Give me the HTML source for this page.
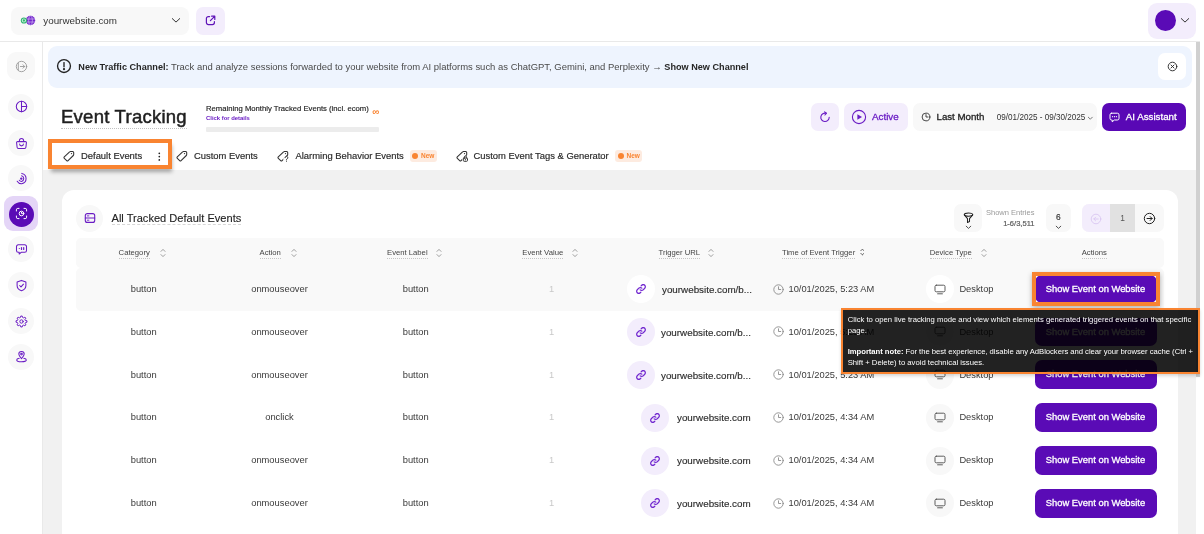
<!DOCTYPE html>
<html>
<head>
<meta charset="utf-8">
<title>Event Tracking</title>
<style>
*{box-sizing:border-box;margin:0;padding:0}
html,body{width:1204px;height:534px;overflow:hidden;background:#fff}
body{font-family:"Liberation Sans",sans-serif;color:#2b2b2b;position:relative;font-size:9px}
#wrap{position:absolute;left:0;top:0;width:1204px;height:534px;will-change:transform;overflow:hidden}
.abs{position:absolute}
svg{display:block}
/* top bar */
#topbar{left:0;top:0;width:1200px;height:42px;background:#fff;border-bottom:1px solid #e9e9e9}
#site{left:11px;top:7px;width:177.5px;height:27.5px;background:#f8f8f8;border-radius:8px}
#site .t{left:32.3px;top:0;line-height:27px;font-size:9.82px;color:#333}
#ext{left:196px;top:7px;width:29px;height:27.5px;background:#f3edfc;border-radius:7px}
#ava{left:1148px;top:3px;width:48.3px;height:35.7px;background:#f3edfc;border-radius:9px}
#ava .av{left:6.8px;top:7.1px;width:21.2px;height:21.2px;border-radius:50%;background:#5a0bb6}
/* sidebar */
#side{left:0;top:42px;width:43px;height:492px;background:#fff;border-right:1px solid #e9e9e9}
.sic{left:8px;width:26px;height:26px;border-radius:50%;background:radial-gradient(circle at 50% 50%,#f9f9f9 0,#f9f9f9 11.9px,rgba(249,249,249,0) 12.5px)}
/* main */
#mainbg{left:43px;top:170px;width:1153px;height:364px;background:#f1f1f1}
#scroll{left:1196.1px;top:42px;width:3.7px;height:334.5px;background:#d0d0d0}
#banner{left:48px;top:46px;width:1143.5px;height:41.5px;background:#eef4fe;border-radius:9px}
#banner .t{left:30.3px;top:-0.5px;line-height:41.5px;font-size:9.48px;color:#4a4a4a;white-space:nowrap}
#banner b{color:#262626;font-size:9.15px}
#bclose{left:1110px;top:7px;width:28px;height:27px;background:#fff;border-radius:7px}
#title{left:61px;top:105px;font-size:18.5px;line-height:23.1px;color:#1f1f1f;white-space:nowrap;border-bottom:1px dotted #c2c2c2;letter-spacing:0.25px;-webkit-text-stroke:0.5px #1f1f1f}
/* card */
#card{left:61.5px;top:189.6px;width:1116.8px;height:360px;background:#fff;border-radius:12px}

.ico{fill:none;stroke-linecap:round;stroke-linejoin:round}
.med{-webkit-text-stroke:0.3px currentColor}
/* header controls */
.hbtn{top:103px;height:28.3px;border-radius:7px}
#refresh{left:811px;width:28px;background:#f3edfc}
#active{left:844px;width:64px;background:#f3edfc}
#active .t{left:28px;top:.4px;line-height:28px;font-size:9.8px;color:#6a1cc4}
#range{left:913px;width:184px;background:#f8f8f8}
#range .a{left:23.5px;top:.4px;line-height:28px;font-size:9.7px;color:#222;white-space:nowrap}
#range .b{left:83.8px;top:0.7px;line-height:28px;font-size:8.13px;color:#333;white-space:nowrap}
#ai{left:1102px;width:84px;background:#5908b5}
#ai .t{left:23.8px;top:.3px;line-height:28px;font-size:9.76px;color:#fff;white-space:nowrap}
/* quota */
#q1{left:206px;top:103.8px;font-size:7.7px;line-height:9px;color:#222;white-space:nowrap;-webkit-text-stroke:0.15px #222}
#q2{left:206px;top:114px;font-size:5.9px;line-height:8px;color:#6a1cc4;font-weight:bold;white-space:nowrap}
#q3{left:206px;top:127.2px;width:173px;height:4.7px;background:#ececec;border-radius:1px}
#q4{left:372.2px;top:107.4px;font-size:9.6px;line-height:10px;color:#f98431;font-weight:bold}
/* tabs */
.tab{top:149.4px;line-height:14px;font-size:9.42px;color:#2b2b2b;white-space:nowrap;-webkit-text-stroke:0.18px #2b2b2b}
.tico{top:150px}
#hl1{left:48px;top:139px;width:124px;height:30px;border:4px solid #f98431;background:#fff;box-shadow:1px 4px 4px -1.5px rgba(0,0,0,.32)}
.badge{top:150px;width:27px;height:12px;border-radius:3px;background:#fdebe0}
.badge i{position:absolute;left:2.5px;top:2.8px;width:6.4px;height:6.4px;border-radius:50%;background:#f98431}
.badge span{position:absolute;left:11.5px;top:0;line-height:12px;font-size:6.5px;font-weight:bold;color:#f98431}

/* card content */
#cico{left:76px;top:205px;width:27px;height:27px;border-radius:50%;background:#f8f8f8}
#ctitle{left:111.5px;top:211.6px;font-size:11.07px;line-height:12.6px;color:#222;white-space:nowrap;border-bottom:1px dashed #d6d6d6;-webkit-text-stroke:0.12px #222}
.tb{top:204.2px;height:28.2px;background:#f8f8f8;border-radius:7px}
#se1{left:940px;top:208px;width:94.5px;text-align:right;font-size:7.54px;line-height:9px;color:#9a9a9a;white-space:nowrap}
#se2{left:940px;top:219px;width:94.5px;text-align:right;font-size:7.55px;line-height:9px;color:#5c5c5c;white-space:nowrap;-webkit-text-stroke:0.2px #5c5c5c}
#thead{left:76px;top:237.5px;width:1087.5px;height:30.2px;background:#f9f9f9;border-radius:5px}
.th{top:247.6px;font-size:7.7px;line-height:10.2px;color:#444;white-space:nowrap;border-bottom:1px dotted #c4c4c4}
#row1bg{left:76px;top:267.5px;width:1087.5px;height:43px;background:#f9f9f9;border-radius:5px}
.cc{font-size:9.35px;line-height:14px;color:#3a3a3a;white-space:nowrap;transform:translateX(-50%)}
.l{font-size:9.3px;line-height:14px;color:#3a3a3a;white-space:nowrap}
.one{color:#c9c9c9}
.url{margin-top:.6px;font-size:9.82px;color:#2e2e2e;-webkit-text-stroke:0.15px #2e2e2e}
.circ{width:28px;height:28px;border-radius:50%}
.btn{left:1034.5px;width:122px;height:28.6px;border-radius:7px;background:#5a0bb6;color:#fff;font-size:9.4px;line-height:28.6px;text-align:center;white-space:nowrap}

/* sidebar items */
#sact{left:4px;top:196px;width:34px;height:35px;border-radius:9px;background:#e4d5f7}
#sact i{position:absolute;left:5px;top:5.500px;width:25px;height:25px;border-radius:50%;background:#5a0bb6}
/* highlight + tooltip */
#hl2{left:1032px;top:272px;width:128px;height:33.800px;border:4px solid #f98431;box-shadow:0 2px 5px rgba(0,0,0,.3)}
#tip{left:841px;top:308px;width:359.2px;height:66px;background:rgba(0,0,0,.865);border:2px solid #f98431;box-shadow:0 2px 3px rgba(0,0,0,.16);color:#fff;font-size:7.7px;line-height:10.700px;padding:5.300px 0 0 4.700px;white-space:nowrap}
#tip p{margin:0 0 10.700px 0}
#tl3{letter-spacing:-0.04px}
</style>
</head>
<body>
<div id="wrap">
<div id="topbar" class="abs"></div>
<div id="site" class="abs"><div class="t abs">yourwebsite.com</div></div>
<div id="ext" class="abs"></div>
<div id="ava" class="abs"><div class="av abs"></div></div>

<div id="side" class="abs"></div>
<div id="mainbg" class="abs"></div>
<div id="scroll" class="abs"></div>

<div id="banner" class="abs">
  <div class="t abs"><b>New Traffic Channel:</b> Track and analyze sessions forwarded to your website from AI platforms such as ChatGPT, Gemini, and Perplexity &rarr; <b>Show New Channel</b></div>
  <div id="bclose" class="abs"></div>
</div>

<div id="title" class="abs">Event Tracking</div>


<!-- top bar icons -->
<svg class="abs" style="left:20px;top:13px" width="16" height="15" viewBox="0 0 16 15">
  <circle cx="10.500" cy="7.500" r="4.700" fill="#7226cc"/>
  <g stroke="#d9c4f5" stroke-width=".75" fill="none" opacity=".85"><ellipse cx="10.500" cy="7.500" rx="1.900" ry="4.500"/><path d="M6 6h9M6 9h9"/></g>
  <circle cx="3.900" cy="7.500" r="3.100" fill="#2db56d"/><circle cx="3.900" cy="7.500" r="2.050" fill="#d4f3e2"/><circle cx="3.900" cy="7.500" r="1.150" fill="#2db56d"/>
</svg>
<svg class="abs ico" style="left:171px;top:17px" width="10" height="7" viewBox="0 0 10 7" stroke="#333" stroke-width="1"><path d="M1.300 1.600 5 5.100 8.700 1.600"/></svg>
<svg class="abs ico" style="left:205px;top:15px" width="11" height="11" viewBox="0 0 11 11" stroke="#5f14b8" stroke-width="1.2"><path d="M4.6 1.6H3.4A2 2 0 0 0 1.4 3.6v4a2 2 0 0 0 2 2h4a2 2 0 0 0 2-2V6.6"/><path d="M6.6 1.2h3.2v3.2M9.6 1.4 5.4 5.6"/></svg>
<svg class="abs ico" style="left:1180.3px;top:17px" width="10" height="7" viewBox="0 0 10 7" stroke="#333" stroke-width="1"><path d="M1.300 1.600 5 5.100 8.700 1.600"/></svg>

<!-- banner icons -->
<svg class="abs ico" style="left:56.100px;top:58.400px" width="16" height="16" viewBox="0 0 16 16" stroke="#222" stroke-width="1.350"><circle cx="8" cy="8" r="6.450"/><path d="M8 4.600v4.200"/><circle cx="8" cy="11.200" r=".45" fill="#222"/></svg>
<svg class="abs ico" style="left:1167px;top:61px" width="11" height="11" viewBox="0 0 11 11" stroke="#222" stroke-width=".9"><circle cx="5.5" cy="5.5" r="4.3"/><path d="M4 4l3 3M7 4 4 7"/></svg>

<!-- quota -->
<div id="q1" class="abs">Remaining Monthly Tracked Events (incl. ecom)</div>
<div id="q2" class="abs">Click for details</div>
<div id="q3" class="abs"></div>
<div id="q4" class="abs">&infin;</div>

<!-- header buttons -->
<div id="refresh" class="abs hbtn">
  <svg class="abs ico" style="left:8px;top:8px" width="12" height="12" viewBox="0 0 12 12" stroke="#6a1cc4" stroke-width="1.1"><path d="M7.2 2.3A4.2 4.2 0 1 0 10.2 6.3"/><path d="M5.6 .9 7.4 2.3 5.9 4"/></svg>
</div>
<div id="active" class="abs hbtn">
  <svg class="abs" style="left:7px;top:6px" width="16" height="16" viewBox="0 0 16 16"><circle cx="8" cy="8" r="6.6" fill="none" stroke="#6a1cc4" stroke-width="1.1"/><path d="M6.4 5.2v5.6L11 8z" fill="#6a1cc4"/></svg>
  <div class="t abs med">Active</div>
</div>
<div id="range" class="abs hbtn">
  <svg class="abs ico" style="left:7.600px;top:9.200px" width="10" height="10" viewBox="0 0 10 10" stroke="#333" stroke-width=".9"><circle cx="5" cy="5" r="3.900"/><path d="M5 2.6V5h2"/></svg>
  <div class="a abs med">Last Month</div>
  <div class="b abs">09/01/2025 - 09/30/2025</div>
  <svg class="abs ico" style="left:173.5px;top:12.5px" width="7" height="5" viewBox="0 0 7 5" stroke="#555" stroke-width=".8"><path d="M1.3 1.2l2 2 2-2"/></svg>
</div>
<div id="ai" class="abs hbtn">
  <svg class="abs ico" style="left:7px;top:9px" width="11" height="11" viewBox="0 0 11 11" stroke="#fff" stroke-width="1"><path d="M2.6 1.2h5.8a1.6 1.6 0 0 1 1.6 1.6v3.6A1.6 1.6 0 0 1 8.400 8H5.400L3.200 9.800V8H2.600A1.600 1.600 0 0 1 1 6.400V2.800a1.600 1.600 0 0 1 1.600-1.600z"/><path d="M3.600 4.700h.01M5.500 4.700h.01M7.400 4.700h.01" stroke-width="1.2"/></svg>
  <div class="t abs med">AI Assistant</div>
</div>

<!-- tabs -->
<div id="hl1" class="abs"></div>
<svg class="abs ico tico" style="left:63px" width="12" height="12" viewBox="0 0 12 12" stroke="#333" stroke-width="1.050"><path d="M1.300 6.900 6.600 1.800a1.300 1.300 0 0 1 .900-.400H9.700a1 1 0 0 1 1 1v2.200a1.300 1.300 0 0 1-.400.900L5.100 10.700a1 1 0 0 1-1.400 0L1.300 8.300a1 1 0 0 1 0-1.400z"/><path d="M8.500 3.600h.01" stroke-width="1.300"/></svg>
<div class="tab abs" style="left:81px">Default Events</div>
<svg class="abs" style="left:157px;top:151px" width="4" height="11" viewBox="0 0 4 11" fill="#222"><circle cx="2.300" cy="2.300" r=".85"/><circle cx="2.300" cy="5.600" r=".85"/><circle cx="2.300" cy="8.900" r=".85"/></svg>

<svg class="abs ico tico" style="left:176px" width="12" height="12" viewBox="0 0 12 12" stroke="#333" stroke-width="1.050"><path d="M1.300 6.900 6.600 1.800a1.300 1.300 0 0 1 .900-.400H9.700a1 1 0 0 1 1 1v2.200a1.300 1.300 0 0 1-.400.900L5.100 10.700a1 1 0 0 1-1.400 0L1.300 8.300a1 1 0 0 1 0-1.400z"/><path d="M8.500 3.600h.01" stroke-width="1.300"/></svg>
<div class="tab abs" style="left:194px">Custom Events</div>

<svg class="abs ico tico" style="left:277px" width="13" height="12" viewBox="0 0 13 12" stroke="#333" stroke-width="1.050"><path d="M1.300 6.900 6.600 1.800a1.300 1.300 0 0 1 .900-.400H9.700a1 1 0 0 1 1 1v2.200a1.300 1.300 0 0 1-.400.900L5.100 10.700a1 1 0 0 1-1.400 0L1.300 8.300a1 1 0 0 1 0-1.400z"/><path d="M8.500 3.600h.01" stroke-width="1.300"/><circle cx="9.300" cy="9" r="3.100" fill="#fff" stroke="none"/><path d="M8 7.700a1.400 1.400 0 1 1 2.100 1.200c-.5.300-.7.500-.7 1M9.400 11.300h.01" stroke-width="1"/></svg>
<div class="tab abs" style="left:295.5px">Alarming Behavior Events</div>
<div class="badge abs" style="left:409.5px"><i></i><span>New</span></div>

<svg class="abs ico tico" style="left:455.5px" width="13" height="12" viewBox="0 0 13 12" stroke="#333" stroke-width="1.050"><path d="M1.300 6.900 6.600 1.800a1.300 1.300 0 0 1 .900-.400H9.700a1 1 0 0 1 1 1v2.200a1.300 1.300 0 0 1-.400.900L5.100 10.700a1 1 0 0 1-1.400 0L1.300 8.300a1 1 0 0 1 0-1.400z"/><path d="M8.500 3.600h.01" stroke-width="1.300"/><rect x="6.200" y="5.800" width="6.200" height="6.200" fill="#fff" stroke="none"/><rect x="7.300" y="8" width="4.200" height="3.300" rx=".9" stroke-width="1"/><path d="M8.200 8V7.300a1.200 1.200 0 0 1 2.400 0V8M9.400 9.500v.4" stroke-width="1"/></svg>
<div class="tab abs" style="left:473.500px">Custom Event Tags &amp; Generator</div>
<div class="badge abs" style="left:615px"><i></i><span>New</span></div>

<div id="card" class="abs"></div>
<!-- card content -->
<div id="cico" class="abs"><svg class="abs ico" style="left:7.600px;top:6.800px" width="12" height="12" viewBox="0 0 12 12" stroke="#6a1cc4" stroke-width="1.100"><rect x="1.300" y="1.600" width="9.400" height="8.800" rx="2"/><path d="M1.300 6h9.400"/><path d="M3.300 3.900h1.600M3.300 8.200h1.600" stroke-width=".9"/></svg></div>
<div id="ctitle" class="abs">All Tracked Default Events</div>
<div class="tb abs" style="left:954px;width:28px"><svg class="abs ico" style="left:8.500px;top:7.5px" width="11" height="12" viewBox="0 0 11 12" stroke="#222" stroke-width="1.050"><ellipse cx="5.500" cy="2.600" rx="4.200" ry="1.600"/><path d="M1.300 2.800 4.500 6.600v3.800l2-.8V6.600l3.200-3.800"/></svg><svg class="abs ico" style="left:10.500px;top:20.500px" width="7" height="5" viewBox="0 0 7 5" stroke="#333" stroke-width=".85"><path d="M1.200 1.200l2.300 2.200 2.300-2.200"/></svg></div>
<div id="se1" class="abs">Shown Entries</div><div id="se2" class="abs">1-6/3,511</div>
<div class="tb abs" style="left:1046px;width:24.500px"><div class="abs" style="left:0;width:24.500px;text-align:center;top:9px;font-size:8.4px;line-height:9px;color:#333;-webkit-text-stroke:0.15px #333">6</div><svg class="abs ico" style="left:8.800px;top:20.500px" width="7" height="5" viewBox="0 0 7 5" stroke="#333" stroke-width=".85"><path d="M1.200 1.200l2.300 2.200 2.300-2.200"/></svg></div>
<div class="tb abs" style="left:1082px;width:81.500px"></div>
<div class="abs" style="left:1082px;top:204.2px;width:28px;height:28.2px;background:#f3edfc;border-radius:7px 0 0 7px"><svg class="abs ico" style="left:8px;top:8.500px" width="12" height="12" viewBox="0 0 12 12" stroke="#d9c6f2" stroke-width=".9"><circle cx="6" cy="6" r="4.800"/><path d="M8.200 6H3.800M5.600 4.200 3.800 6l1.800 1.800"/></svg></div>
<div class="abs" style="left:1110px;top:204.2px;width:25px;height:28.2px;background:#e1e1e1;text-align:center;font-size:8.4px;line-height:28.6px;color:#555">1</div>
<svg class="abs ico" style="left:1143px;top:212px" width="13" height="13" viewBox="0 0 13 13" stroke="#222" stroke-width="1"><circle cx="6.500" cy="6.500" r="5.200"/><path d="M4 6.500h5M7.200 4.600 9.100 6.500 7.200 8.400"/></svg>
<div id="thead" class="abs"></div>
<div class="th abs" style="left:118.6px">Category</div>
<svg class="abs ico" style="left:160px;top:247.6px" width="6" height="10" viewBox="0 0 6 10" stroke="#777" stroke-width=".7"><path d="M1 3.400 3 1.400 5 3.400M1 6.600 3 8.600 5 6.600"/></svg>
<div class="th abs" style="left:259.5px">Action</div>
<svg class="abs ico" style="left:291px;top:247.6px" width="6" height="10" viewBox="0 0 6 10" stroke="#777" stroke-width=".7"><path d="M1 3.400 3 1.400 5 3.400M1 6.600 3 8.600 5 6.600"/></svg>
<div class="th abs" style="left:387px">Event Label</div>
<svg class="abs ico" style="left:436px;top:247.6px" width="6" height="10" viewBox="0 0 6 10" stroke="#777" stroke-width=".7"><path d="M1 3.400 3 1.400 5 3.400M1 6.600 3 8.600 5 6.600"/></svg>
<div class="th abs" style="left:522.3px">Event Value</div>
<svg class="abs ico" style="left:572.2px;top:247.6px" width="6" height="10" viewBox="0 0 6 10" stroke="#777" stroke-width=".7"><path d="M1 3.400 3 1.400 5 3.400M1 6.600 3 8.600 5 6.600"/></svg>
<div class="th abs" style="left:658.5px">Trigger URL</div>
<svg class="abs ico" style="left:708.4px;top:247.6px" width="6" height="10" viewBox="0 0 6 10" stroke="#777" stroke-width=".7"><path d="M1 3.400 3 1.400 5 3.400M1 6.600 3 8.600 5 6.600"/></svg>
<div class="th abs" style="left:782px">Time of Event Trigger</div>
<svg class="abs ico" style="left:859.6px;top:248.4px" width="4.8" height="8" viewBox="0 0 6 10" stroke="#444" stroke-width="1"><path d="M1 3.400 3 1.400 5 3.400M1 6.600 3 8.600 5 6.600"/></svg>
<div class="th abs" style="left:929.7px">Device Type</div>
<svg class="abs ico" style="left:981px;top:247.6px" width="6" height="10" viewBox="0 0 6 10" stroke="#777" stroke-width=".7"><path d="M1 3.400 3 1.400 5 3.400M1 6.600 3 8.600 5 6.600"/></svg>
<div class="th abs" style="left:1081.7px">Actions</div>
<div id="row1bg" class="abs"></div>
<div class="cc abs" style="left:143.700px;top:281.95px">button</div>
<div class="cc abs" style="left:279.500px;top:281.95px">onmouseover</div>
<div class="cc abs" style="left:415.700px;top:281.95px">button</div>
<div class="cc abs one" style="left:551.600px;top:281.95px">1</div>
<div class="circ abs" style="left:627.3px;top:275.05px;background:#fff"><svg class="abs ico" style="left:9px;top:9px" width="10" height="10" viewBox="0 0 11 11" stroke="#7127cf" stroke-width="1.35"><path d="M4.600 6.400a2.300 2.300 0 0 0 3.300 0l1.700-1.700a2.300 2.300 0 0 0-3.300-3.300l-.7.700"/><path d="M6.400 4.600a2.300 2.300 0 0 0-3.300 0L1.400 6.300a2.300 2.300 0 0 0 3.300 3.300l.7-.7"/></svg></div>
<div class="l url abs med" style="left:662px;top:282.45px">yourwebsite.com/b...</div>
<svg class="abs ico" style="left:772.9px;top:283.55px" width="11" height="11" viewBox="0 0 11 11" stroke="#858585" stroke-width=".85"><circle cx="5.500" cy="5.500" r="4.700"/><path d="M5.500 2.800V5.500h2.200"/></svg>
<div class="l abs" style="left:788.500px;top:281.95px">10/01/2025, 5:23 AM</div>
<div class="circ abs" style="left:925.8px;top:275.05px;background:#fff"><svg class="abs ico" style="left:8px;top:8.500px" width="12" height="11" viewBox="0 0 12 11" stroke="#555" stroke-width=".95"><rect x="1" y="1.200" width="10" height="6.600" rx="1.300"/><path d="M3.600 9.800h4.800"/></svg></div>
<div class="l abs" style="left:959.400px;top:281.95px">Desktop</div>
<div class="btn abs med" style="top:274.75px">Show Event on Website</div>
<div class="cc abs" style="left:143.700px;top:324.75px">button</div>
<div class="cc abs" style="left:279.500px;top:324.75px">onmouseover</div>
<div class="cc abs" style="left:415.700px;top:324.75px">button</div>
<div class="cc abs one" style="left:551.600px;top:324.75px">1</div>
<div class="circ abs" style="left:627.3px;top:317.92px;background:#f3edfc"><svg class="abs ico" style="left:9px;top:9px" width="10" height="10" viewBox="0 0 11 11" stroke="#7127cf" stroke-width="1.35"><path d="M4.600 6.400a2.300 2.300 0 0 0 3.300 0l1.700-1.700a2.300 2.300 0 0 0-3.300-3.300l-.7.700"/><path d="M6.400 4.600a2.300 2.300 0 0 0-3.300 0L1.400 6.300a2.300 2.300 0 0 0 3.300 3.300l.7-.7"/></svg></div>
<div class="l url abs med" style="left:661px;top:325.25px">yourwebsite.com/b...</div>
<svg class="abs ico" style="left:772.9px;top:326.42px" width="11" height="11" viewBox="0 0 11 11" stroke="#858585" stroke-width=".85"><circle cx="5.500" cy="5.500" r="4.700"/><path d="M5.500 2.800V5.500h2.200"/></svg>
<div class="l abs" style="left:788.500px;top:324.75px">10/01/2025, 5:23 AM</div>
<div class="circ abs" style="left:925.8px;top:317.92px;background:#f8f8f8"><svg class="abs ico" style="left:8px;top:8.500px" width="12" height="11" viewBox="0 0 12 11" stroke="#555" stroke-width=".95"><rect x="1" y="1.200" width="10" height="6.600" rx="1.300"/><path d="M3.600 9.800h4.800"/></svg></div>
<div class="l abs" style="left:959.400px;top:324.75px">Desktop</div>
<div class="btn abs med" style="top:317.62px">Show Event on Website</div>
<div class="cc abs" style="left:143.700px;top:367.55px">button</div>
<div class="cc abs" style="left:279.500px;top:367.55px">onmouseover</div>
<div class="cc abs" style="left:415.700px;top:367.55px">button</div>
<div class="cc abs one" style="left:551.600px;top:367.55px">1</div>
<div class="circ abs" style="left:627.3px;top:360.79px;background:#f3edfc"><svg class="abs ico" style="left:9px;top:9px" width="10" height="10" viewBox="0 0 11 11" stroke="#7127cf" stroke-width="1.35"><path d="M4.600 6.400a2.300 2.300 0 0 0 3.300 0l1.700-1.700a2.300 2.300 0 0 0-3.300-3.300l-.7.700"/><path d="M6.400 4.600a2.300 2.300 0 0 0-3.300 0L1.400 6.300a2.300 2.300 0 0 0 3.300 3.300l.7-.7"/></svg></div>
<div class="l url abs med" style="left:661px;top:368.05px">yourwebsite.com/b...</div>
<svg class="abs ico" style="left:772.9px;top:369.29px" width="11" height="11" viewBox="0 0 11 11" stroke="#858585" stroke-width=".85"><circle cx="5.500" cy="5.500" r="4.700"/><path d="M5.500 2.800V5.500h2.200"/></svg>
<div class="l abs" style="left:788.500px;top:367.55px">10/01/2025, 5:23 AM</div>
<div class="circ abs" style="left:925.8px;top:360.79px;background:#f8f8f8"><svg class="abs ico" style="left:8px;top:8.500px" width="12" height="11" viewBox="0 0 12 11" stroke="#555" stroke-width=".95"><rect x="1" y="1.200" width="10" height="6.600" rx="1.300"/><path d="M3.600 9.800h4.800"/></svg></div>
<div class="l abs" style="left:959.400px;top:367.55px">Desktop</div>
<div class="btn abs med" style="top:360.49px">Show Event on Website</div>
<div class="cc abs" style="left:143.700px;top:410.35px">button</div>
<div class="cc abs" style="left:279.500px;top:410.35px">onclick</div>
<div class="cc abs" style="left:415.700px;top:410.35px">button</div>
<div class="cc abs one" style="left:551.600px;top:410.35px">1</div>
<div class="circ abs" style="left:641.4px;top:403.66px;background:#f3edfc"><svg class="abs ico" style="left:9px;top:9px" width="10" height="10" viewBox="0 0 11 11" stroke="#7127cf" stroke-width="1.35"><path d="M4.600 6.400a2.300 2.300 0 0 0 3.300 0l1.700-1.700a2.300 2.300 0 0 0-3.300-3.300l-.7.700"/><path d="M6.400 4.600a2.300 2.300 0 0 0-3.300 0L1.400 6.300a2.300 2.300 0 0 0 3.300 3.300l.7-.7"/></svg></div>
<div class="l url abs med" style="left:677px;top:410.85px">yourwebsite.com</div>
<svg class="abs ico" style="left:772.9px;top:412.16px" width="11" height="11" viewBox="0 0 11 11" stroke="#858585" stroke-width=".85"><circle cx="5.500" cy="5.500" r="4.700"/><path d="M5.500 2.800V5.500h2.200"/></svg>
<div class="l abs" style="left:788.500px;top:410.35px">10/01/2025, 4:34 AM</div>
<div class="circ abs" style="left:925.8px;top:403.66px;background:#f8f8f8"><svg class="abs ico" style="left:8px;top:8.500px" width="12" height="11" viewBox="0 0 12 11" stroke="#555" stroke-width=".95"><rect x="1" y="1.200" width="10" height="6.600" rx="1.300"/><path d="M3.600 9.800h4.800"/></svg></div>
<div class="l abs" style="left:959.400px;top:410.35px">Desktop</div>
<div class="btn abs med" style="top:403.36px">Show Event on Website</div>
<div class="cc abs" style="left:143.700px;top:453.15px">button</div>
<div class="cc abs" style="left:279.500px;top:453.15px">onmouseover</div>
<div class="cc abs" style="left:415.700px;top:453.15px">button</div>
<div class="cc abs one" style="left:551.600px;top:453.15px">1</div>
<div class="circ abs" style="left:641.4px;top:446.53px;background:#f3edfc"><svg class="abs ico" style="left:9px;top:9px" width="10" height="10" viewBox="0 0 11 11" stroke="#7127cf" stroke-width="1.35"><path d="M4.600 6.400a2.300 2.300 0 0 0 3.300 0l1.700-1.700a2.300 2.300 0 0 0-3.300-3.300l-.7.700"/><path d="M6.400 4.600a2.300 2.300 0 0 0-3.300 0L1.400 6.300a2.300 2.300 0 0 0 3.300 3.300l.7-.7"/></svg></div>
<div class="l url abs med" style="left:677px;top:453.65px">yourwebsite.com</div>
<svg class="abs ico" style="left:772.9px;top:455.03px" width="11" height="11" viewBox="0 0 11 11" stroke="#858585" stroke-width=".85"><circle cx="5.500" cy="5.500" r="4.700"/><path d="M5.500 2.800V5.500h2.200"/></svg>
<div class="l abs" style="left:788.500px;top:453.15px">10/01/2025, 4:34 AM</div>
<div class="circ abs" style="left:925.8px;top:446.53px;background:#f8f8f8"><svg class="abs ico" style="left:8px;top:8.500px" width="12" height="11" viewBox="0 0 12 11" stroke="#555" stroke-width=".95"><rect x="1" y="1.200" width="10" height="6.600" rx="1.300"/><path d="M3.600 9.800h4.800"/></svg></div>
<div class="l abs" style="left:959.400px;top:453.15px">Desktop</div>
<div class="btn abs med" style="top:446.23px">Show Event on Website</div>
<div class="cc abs" style="left:143.700px;top:495.95px">button</div>
<div class="cc abs" style="left:279.500px;top:495.95px">onmouseover</div>
<div class="cc abs" style="left:415.700px;top:495.95px">button</div>
<div class="cc abs one" style="left:551.600px;top:495.95px">1</div>
<div class="circ abs" style="left:641.4px;top:489.40px;background:#f3edfc"><svg class="abs ico" style="left:9px;top:9px" width="10" height="10" viewBox="0 0 11 11" stroke="#7127cf" stroke-width="1.35"><path d="M4.600 6.400a2.300 2.300 0 0 0 3.300 0l1.700-1.700a2.300 2.300 0 0 0-3.300-3.300l-.7.700"/><path d="M6.400 4.600a2.300 2.300 0 0 0-3.300 0L1.400 6.300a2.300 2.300 0 0 0 3.300 3.300l.7-.7"/></svg></div>
<div class="l url abs med" style="left:677px;top:496.45px">yourwebsite.com</div>
<svg class="abs ico" style="left:772.9px;top:497.90px" width="11" height="11" viewBox="0 0 11 11" stroke="#858585" stroke-width=".85"><circle cx="5.500" cy="5.500" r="4.700"/><path d="M5.500 2.800V5.500h2.200"/></svg>
<div class="l abs" style="left:788.500px;top:495.95px">10/01/2025, 4:34 AM</div>
<div class="circ abs" style="left:925.8px;top:489.40px;background:#f8f8f8"><svg class="abs ico" style="left:8px;top:8.500px" width="12" height="11" viewBox="0 0 12 11" stroke="#555" stroke-width=".95"><rect x="1" y="1.200" width="10" height="6.600" rx="1.300"/><path d="M3.600 9.800h4.800"/></svg></div>
<div class="l abs" style="left:959.400px;top:495.95px">Desktop</div>
<div class="btn abs med" style="top:489.10px">Show Event on Website</div>
<!-- sidebar -->
<div class="sic abs" style="top:52px;left:7px;width:28px;height:28px;border-radius:9px;background:#f8f8f8"><svg class="abs ico" style="left:7.500px;top:7.500px" width="13" height="13" viewBox="0 0 13 13" stroke="#9a9a9a" stroke-width=".9"><circle cx="6.500" cy="6.500" r="5.200"/><path d="M3.300 3v7M5.400 6.500h4.200M8 4.800l1.700 1.700L8 8.200"/></svg></div>
<div class="sic abs" style="top:93.6px;background:#f8f8f8"><svg class="abs ico" style="left:6.500px;top:6.500px" width="13" height="13" viewBox="0 0 13 13" stroke="#6a1cc4" stroke-width="1.050"><circle cx="6.500" cy="6.500" r="5.200"/><path d="M6.500 1.300v10.400M6.500 6.500h5.200"/></svg></div>
<div class="sic abs" style="top:130px;background:#f8f8f8"><svg class="abs ico" style="left:6.500px;top:6.500px" width="13" height="13" viewBox="0 0 13 13" stroke="#6a1cc4" stroke-width="1.050"><path d="M2.600 4.600h7.800a1 1 0 0 1 1 1.100l-.5 4.600a1.300 1.300 0 0 1-1.300 1.200H3.400a1.300 1.300 0 0 1-1.300-1.200L1.600 5.700a1 1 0 0 1 1-1.100z"/><path d="M4.400 4.400V3.600a2.100 2.100 0 0 1 4.200 0v.8M4.600 7a1.900 1.900 0 0 0 3.800 0"/></svg></div>
<div class="sic abs" style="top:165px;background:#f8f8f8"><svg class="abs ico" style="left:6.500px;top:6.500px" width="13" height="13" viewBox="0 0 13 13" stroke="#6a1cc4" stroke-width="1.050"><path d="M6.800 1.400a5.300 5.300 0 0 1 0 10.400 5 5 0 0 1-4.600-2.500"/><path d="M6.600 3.800a2.900 2.900 0 0 1 0 5.600 2.700 2.700 0 0 1-2.300-1.200"/><circle cx="6.300" cy="6.600" r=".7" fill="#6a1cc4"/></svg></div>
<div id="sact" class="abs"><i></i><svg class="abs ico" style="left:10.500px;top:11px" width="13" height="13" viewBox="0 0 13 13" stroke="#fff" stroke-width="1"><path d="M1.400 4V2.800a1.400 1.400 0 0 1 1.400-1.400H4M9 1.400h1.200a1.400 1.400 0 0 1 1.400 1.400V4M11.600 9v1.200a1.400 1.400 0 0 1-1.400 1.400H9M4 11.600H2.800a1.400 1.400 0 0 1-1.400-1.400V9"/><circle cx="6.500" cy="6.500" r="2.300"/><path d="M6.500 5.400v1.100h.9"/></svg></div>
<div class="sic abs" style="top:236px;background:#f8f8f8"><svg class="abs ico" style="left:6.500px;top:6.500px" width="13" height="13" viewBox="0 0 13 13" stroke="#6a1cc4" stroke-width="1.050"><path d="M3.200 1.800h6.600a1.700 1.700 0 0 1 1.700 1.700v4a1.700 1.700 0 0 1-1.700 1.700H6.500L4.200 11V9.200H3.200a1.700 1.700 0 0 1-1.700-1.700v-4a1.700 1.700 0 0 1 1.700-1.700z"/><path d="M4.300 5.500h.01M6.500 4.600v1.800M8.700 4.600v1.800" stroke-width="1.200"/></svg></div>
<div class="sic abs" style="top:272px;background:#f8f8f8"><svg class="abs ico" style="left:6.500px;top:6.500px" width="13" height="13" viewBox="0 0 13 13" stroke="#6a1cc4" stroke-width="1.050"><path d="M6.500 1.400 10.900 3v3.400c0 2.600-1.900 4.500-4.400 5.300C4 10.900 2.100 9 2.100 6.400V3z"/><path d="M4.600 6.500l1.400 1.400 2.500-2.700"/></svg></div>
<div class="sic abs" style="top:308px;background:#f8f8f8"><svg class="abs ico" style="left:6.500px;top:6.500px" width="13" height="13" viewBox="0 0 13 13" stroke="#6a1cc4" stroke-width="1.050"><path d="M10.63 5.51 L11.95 5.77 L11.95 7.23 L10.63 7.49 L10.12 8.72 L10.87 9.84 L9.84 10.87 L8.72 10.12 L7.49 10.63 L7.23 11.95 L5.77 11.95 L5.51 10.63 L4.28 10.12 L3.16 10.87 L2.13 9.84 L2.88 8.72 L2.37 7.49 L1.05 7.23 L1.05 5.77 L2.37 5.51 L2.88 4.28 L2.13 3.16 L3.16 2.13 L4.28 2.88 L5.51 2.37 L5.77 1.05 L7.23 1.05 L7.49 2.37 L8.72 2.88 L9.84 2.13 L10.87 3.16 L10.12 4.28z" stroke-width="1"/><circle cx="6.500" cy="6.500" r="1.700" stroke-width="1"/></svg></div>
<div class="sic abs" style="top:343.7px;background:#f8f8f8"><svg class="abs ico" style="left:6.500px;top:6.500px" width="13" height="13" viewBox="0 0 13 13" stroke="#6a1cc4" stroke-width="1.050"><path d="M6.500 8.600C5 7 3.800 5.700 3.800 4.100a2.700 2.700 0 0 1 5.400 0c0 1.600-1.200 2.900-2.700 4.500z"/><circle cx="6.500" cy="4.100" r=".8"/><path d="M4.200 8.300c-1.500.3-2.500.9-2.500 1.600 0 1 2.100 1.800 4.800 1.800s4.800-.8 4.800-1.800c0-.7-1-1.300-2.500-1.600"/></svg></div>
<div id="hl2" class="abs"></div>
<div id="tip" class="abs"><p>Click to open live tracking mode and view which elements generated triggered events on that specific<br>page.</p><p><span id="tl3"><b>Important note:</b> For the best experience, disable any AdBlockers and clear your browser cache (Ctrl +</span><br>Shift + Delete) to avoid technical issues.</p></div>
</div>
</body>
</html>
